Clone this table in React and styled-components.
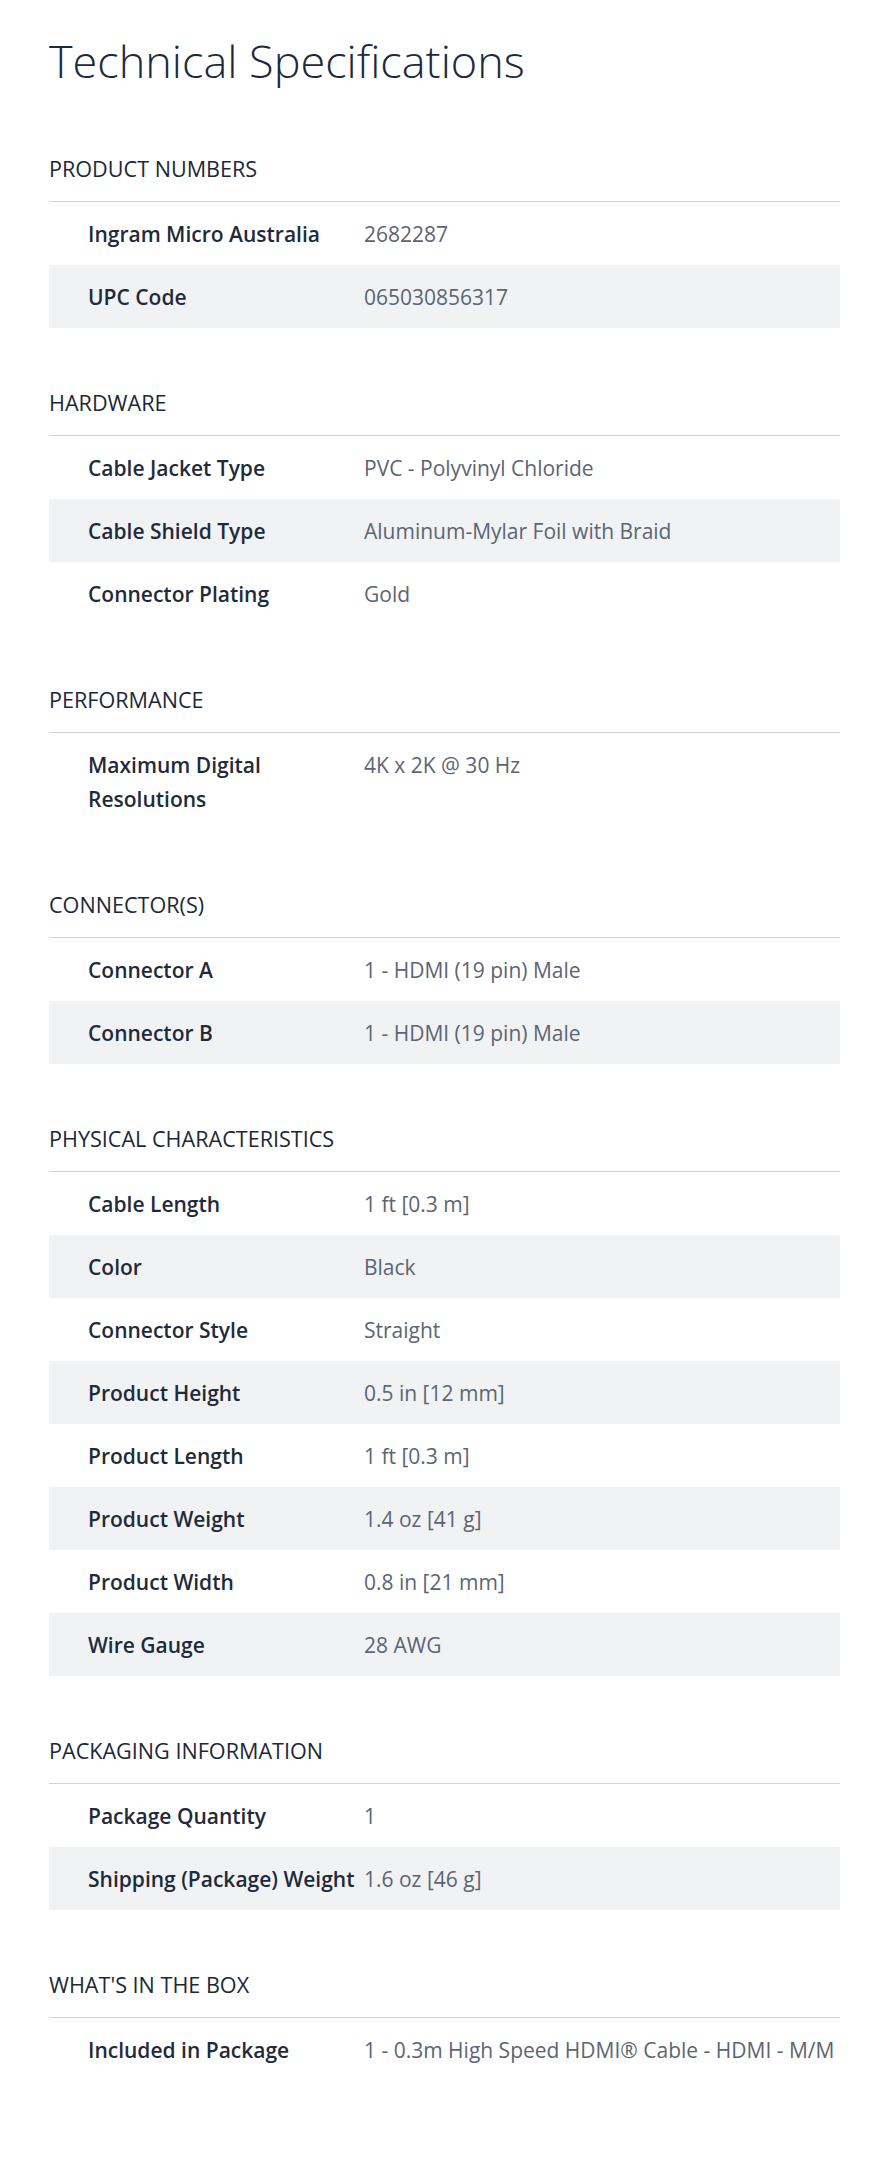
import React from "react";
import styled, { createGlobalStyle } from "styled-components";

const GlobalStyle = createGlobalStyle`
  body {
    margin: 0;
    background: #fff;
    font-family: "Open Sans", "Liberation Sans", sans-serif;
  }
`;

const Page = styled.div`
  box-sizing: border-box;
  width: 876px;
  padding: 34px 36px 60px 49px;
`;

const Title = styled.h1`
  margin: 0 0 66px;
  font-size: 45px;
  line-height: 54px;
  font-weight: 300;
  color: #1b2a3e;
`;

const Section = styled.section`
  & + & {
    margin-top: 60px;
  }
`;

const SectionHeader = styled.h2`
  margin: 0;
  padding-bottom: 17px;
  border-bottom: 1px solid #d2d2d2;
  font-size: 21.6px;
  line-height: 30px;
  font-weight: 400;
  color: #1c2838;
`;

const Row = styled.div`
  display: grid;
  grid-template-columns: 315px 1fr;
  padding: 14.5px 0;
  font-size: 21px;
  line-height: 34px;
  background: ${(p) => (p.$shaded ? "#f1f2f4" : "transparent")};
`;

const Label = styled.div`
  padding: 0 4px 0 39px;
  font-weight: 600;
  color: #1f2b3b;
`;

const Value = styled.div`
  color: #5c6573;
  white-space: nowrap;
`;

const specs = [
  {
    title: "PRODUCT NUMBERS",
    rows: [
      ["Ingram Micro Australia", "2682287"],
      ["UPC Code", "065030856317"],
    ],
  },
  {
    title: "HARDWARE",
    rows: [
      ["Cable Jacket Type", "PVC - Polyvinyl Chloride"],
      ["Cable Shield Type", "Aluminum-Mylar Foil with Braid"],
      ["Connector Plating", "Gold"],
    ],
  },
  {
    title: "PERFORMANCE",
    rows: [["Maximum Digital Resolutions", "4K x 2K @ 30 Hz"]],
  },
  {
    title: "CONNECTOR(S)",
    rows: [
      ["Connector A", "1 - HDMI (19 pin) Male"],
      ["Connector B", "1 - HDMI (19 pin) Male"],
    ],
  },
  {
    title: "PHYSICAL CHARACTERISTICS",
    rows: [
      ["Cable Length", "1 ft [0.3 m]"],
      ["Color", "Black"],
      ["Connector Style", "Straight"],
      ["Product Height", "0.5 in [12 mm]"],
      ["Product Length", "1 ft [0.3 m]"],
      ["Product Weight", "1.4 oz [41 g]"],
      ["Product Width", "0.8 in [21 mm]"],
      ["Wire Gauge", "28 AWG"],
    ],
  },
  {
    title: "PACKAGING INFORMATION",
    rows: [
      ["Package Quantity", "1"],
      ["Shipping (Package) Weight", "1.6 oz [46 g]"],
    ],
  },
  {
    title: "WHAT'S IN THE BOX",
    rows: [["Included in Package", "1 - 0.3m High Speed HDMI® Cable - HDMI - M/M"]],
  },
];

export default function App() {
  return (
    <>
      <GlobalStyle />
      <Page>
        <Title>Technical Specifications</Title>
        {specs.map((section) => (
          <Section key={section.title}>
            <SectionHeader>{section.title}</SectionHeader>
            {section.rows.map(([label, value], i) => (
              <Row key={label} $shaded={i % 2 === 1}>
                <Label>{label}</Label>
                <Value>{value}</Value>
              </Row>
            ))}
          </Section>
        ))}
      </Page>
    </>
  );
}
